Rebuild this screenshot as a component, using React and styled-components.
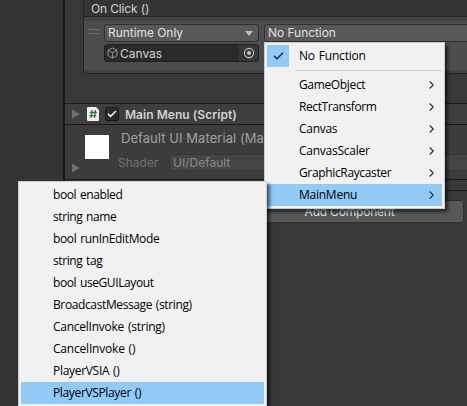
import React from "react";
import styled, { createGlobalStyle } from "styled-components";

const GlobalStyle = createGlobalStyle`
  * { box-sizing: border-box; }
  body { margin: 0; background: #333; overflow: hidden; }
`;

const Screen = styled.div`
  position: relative;
  display: flex;
  width: 467px;
  height: 406px;
  overflow: hidden;
  background: #333333;
  color: #d2d2d2;
  font: 12px/18px Inter, sans-serif;
  white-space: nowrap;
`;
const SidePanel = styled.div`
  flex: 0 0 65px;
  border-right: 2px solid #191919;
`;
const Inspector = styled.main`
  flex: 1;
  min-width: 0;
  background: #383838;
  overflow: hidden;
`;
const EventBox = styled.section`
  width: 450px;
  height: 74px;
  margin-left: 18px;
  border: 1px solid #242424;
  border-top: 0;
  border-radius: 0 0 3px 3px;
  background: #414141;
`;
const EventTitle = styled.header`
  height: 17px;
  padding-left: 7px;
  border-bottom: 1px solid #242424;
  background: #353535;
  line-height: 17px;
  letter-spacing: -0.15px;
`;
const EventEntry = styled.div`
  display: flex;
  height: 49px;
  margin-top: 4px;
  padding: 3px 0 0 5px;
  background: #4d4d4d;
`;
const Grip = styled.div`
  flex: none;
  width: 10px;
  height: 5px;
  margin: 5px 5px 0 0;
  border: solid #707070;
  border-width: 1px 0;
`;
const Fields = styled.div`
  display: grid;
  grid-template: 18px 18px / 155px 250px;
  gap: 2px 5px;
`;
const Dropdown = styled.div`
  display: flex;
  align-items: center;
  justify-content: space-between;
  height: 18px;
  padding: 0 5px 0 3px;
  border: 1px solid #303030;
  border-radius: 3px;
  background: #585858;
  color: #e0e0e0;
  line-height: 16px;
  letter-spacing: -0.05px;
`;
const ObjectField = styled.div`
  display: flex;
  align-items: center;
  height: 18px;
  border: 1px solid #202020;
  border-radius: 3px;
  background: #2a2a2a;
  overflow: hidden;
  padding-left: 2px;
  gap: 2px;
`;
const ObjectName = styled.span`
  padding-top: 2px;
`;
const Picker = styled.span`
  display: grid;
  place-items: center;
  width: 19px;
  height: 17px;
  margin-left: auto;
  background: #373737;
`;
const ComponentHeader = styled.header`
  display: flex;
  align-items: center;
  height: 22px;
  margin-top: 29px;
  padding-left: 7px;
  border: solid #1a1a1a;
  border-width: 1px 0;
  background: #3e3e3e;
  font-weight: 600;
  letter-spacing: 0.05px;
`;
const ComponentTitle = styled.span`
  padding-top: 1px;
`;
const ScriptIcon = styled.svg`
  width: 12px;
  height: 14px;
  margin-left: 7px;
`;
const Checkbox = styled.span`
  display: grid;
  place-items: center;
  width: 14px;
  height: 14px;
  margin: 0 6px;
  border: 1px solid #191919;
  border-radius: 2px;
  background: #2a2a2a;
`;
const Material = styled.section`
  display: flex;
  height: 55px;
  padding-left: 7px;
  border-bottom: 1px solid #1a1a1a;
  background: #3c3c3c;
`;
const MaterialFoldout = styled.div`
  width: 13px;
  padding-top: 38px;
  line-height: 0;
`;
const Swatch = styled.div`
  width: 24px;
  height: 24px;
  margin-top: 10px;
  background: #fff;
`;
const MaterialInfo = styled.div`
  flex: 1;
  min-width: 0;
  padding: 5px 0 0 9px;
  color: #a0a0a0;
`;
const MaterialName = styled.div`
  height: 24px;
  padding-left: 3px;
  font-size: 13px;
  line-height: 17px;
  letter-spacing: 0.06px;
`;
const ShaderRow = styled.div`
  display: flex;
  height: 17px;
  line-height: 18px;
  color: #727272;
`;
const ShaderLabel = styled.span`
  width: 51px;
`;
const ShaderField = styled.span`
  flex: 1;
  padding-left: 3px;
  border: 1px solid #363636;
  border-right: 0;
  border-radius: 3px 0 0 3px;
  background: #454545;
  color: #8b8b8b;
  line-height: 16px;
`;
const Divider = styled.div`
  height: 11px;
  border-bottom: 1px solid #1a1a1a;
`;
const AddButton = styled.button`
  display: block;
  width: 229px;
  height: 23px;
  margin: 9px 0 0 170px;
  padding: 0;
  border: 1px solid #303030;
  border-radius: 3px;
  background: #585858;
  color: #e0e0e0;
  font: 12px/21px Inter, sans-serif;
  letter-spacing: -0.2px;
`;
const Menu = styled.div`
  position: absolute;
  left: ${(p) => p.$x}px;
  top: ${(p) => p.$y}px;
  width: ${(p) => p.$width}px;
  padding: 2px;
  border: 1px solid #ccc;
  background: #f1f1f1;
  color: #000;
  box-shadow: 3px 3px 3px rgba(0, 0, 0, 0.55);
  font: 12px/22px "Open Sans", sans-serif;
`;
const MenuItem = styled.div`
  display: flex;
  align-items: center;
  height: 22px;
  padding-right: 8px;
  background: ${(p) => (p.$active ? "#91c9f7" : "transparent")};
`;
const MenuLabel = styled.span`
  flex: 1;
  letter-spacing: ${(p) => p.$spacing ?? -0.3}px;
  word-spacing: 1px;
`;
const MenuMark = styled.span`
  display: grid;
  place-items: center;
  width: 22px;
  height: 22px;
  margin-right: 10px;
  background: ${(p) => (p.$checked ? "#91c9f7" : "transparent")};
`;
const Separator = styled.div`
  height: 1px;
  margin: 3px 0 3px 28px;
  background: #d0d0d0;
`;

const Caret = () => (
  <svg width="8" height="5"><path d="M0 0h8L4 5z" fill="#bdbdbd" /></svg>
);
const Foldout = () => (
  <svg width="8" height="10"><path d="M0 .5 8 5 0 9.5z" fill="#707070" /></svg>
);
const Chevron = () => (
  <svg width="5" height="8" viewBox="0 0 5 8"><path d="m.8.5 3.4 3.5L.8 7.5" fill="none" stroke="#333" strokeWidth="1.2" /></svg>
);
const Cube = () => (
  <svg width="11" height="12" viewBox="0 0 11 12" fill="none" stroke="#929292"><path d="M5.5 1 10 3.2v5.3L5.5 11 1 8.5V3.2zM1 3.5l4.5 2L10 3.5M5.5 5.5V11" /></svg>
);
const Target = () => (
  <svg width="12" height="12"><circle cx="6" cy="6" r="4.6" fill="none" stroke="#c4c4c4" strokeWidth="1.1" /><circle cx="6" cy="6" r="2" fill="#c4c4c4" /></svg>
);

const functions = [
  ["GameObject", -0.35], ["RectTransform", -0.4], ["Canvas", -0.3],
  ["CanvasScaler", -0.25], ["GraphicRaycaster", -0.35], ["MainMenu", -0.25],
];
const methods = [
  ["bool enabled", -0.4], ["string name", -0.4], ["bool runInEditMode", -0.35],
  ["string tag", -0.4], ["bool useGUILayout", -0.4], ["BroadcastMessage (string)", -0.38],
  ["CancelInvoke (string)", -0.25], ["CancelInvoke ()", -0.2], ["PlayerVSIA ()", -0.3],
  ["PlayerVSPlayer ()", -0.35],
];

export default function App() {
  return (
    <>
      <GlobalStyle />
      <Screen>
        <SidePanel />
        <Inspector>
          <EventBox>
            <EventTitle>On Click ()</EventTitle>
            <EventEntry>
              <Grip />
              <Fields>
                <Dropdown>Runtime Only<Caret /></Dropdown>
                <Dropdown>No Function</Dropdown>
                <ObjectField><Cube /><ObjectName>Canvas</ObjectName><Picker><Target /></Picker></ObjectField>
              </Fields>
            </EventEntry>
          </EventBox>
          <ComponentHeader>
            <Foldout />
            <ScriptIcon viewBox="0 0 12 14">
              <path d="M1 0h8l3 3v10q0 1-1 1H1q-1 0-1-1V1q0-1 1-1z" fill="#f0f0f0" />
              <path d="M5 3 4 11M8.5 3l-1 8M2.8 5.5h7M2.3 8.7h7" fill="none" stroke="#247a38" strokeWidth="1.3" />
            </ScriptIcon>
            <Checkbox>
              <svg width="10" height="8"><path d="m1 3.8 2.6 2.5L9 1" fill="none" stroke="#f0f0f0" strokeWidth="1.6" /></svg>
            </Checkbox>
            <ComponentTitle>Main Menu (Script)</ComponentTitle>
          </ComponentHeader>
          <Material>
            <MaterialFoldout><Foldout /></MaterialFoldout>
            <Swatch />
            <MaterialInfo>
              <MaterialName>Default UI Material (Material)</MaterialName>
              <ShaderRow><ShaderLabel>Shader</ShaderLabel><ShaderField>UI/Default</ShaderField></ShaderRow>
            </MaterialInfo>
          </Material>
          <Divider />
          <AddButton>Add Component</AddButton>
        </Inspector>

        <Menu $x={264} $y={42} $width={181}>
          <MenuItem>
            <MenuMark $checked>
              <svg width="11" height="8"><path d="m1 3.8 3 3L10 .8" fill="none" stroke="#223" strokeWidth="1.4" /></svg>
            </MenuMark>
            <MenuLabel $spacing={-0.2}>No Function</MenuLabel>
          </MenuItem>
          <Separator />
          {functions.map(([name, spacing]) => (
            <MenuItem key={name} $active={name === "MainMenu"}>
              <MenuMark /><MenuLabel $spacing={spacing}>{name}</MenuLabel><Chevron />
            </MenuItem>
          ))}
        </Menu>

        <Menu $x={18} $y={181} $width={249}>
          {methods.map(([name, spacing]) => (
            <MenuItem key={name} $active={name === "PlayerVSPlayer ()"}>
              <MenuMark /><MenuLabel $spacing={spacing}>{name}</MenuLabel>
            </MenuItem>
          ))}
        </Menu>
      </Screen>
    </>
  );
}
